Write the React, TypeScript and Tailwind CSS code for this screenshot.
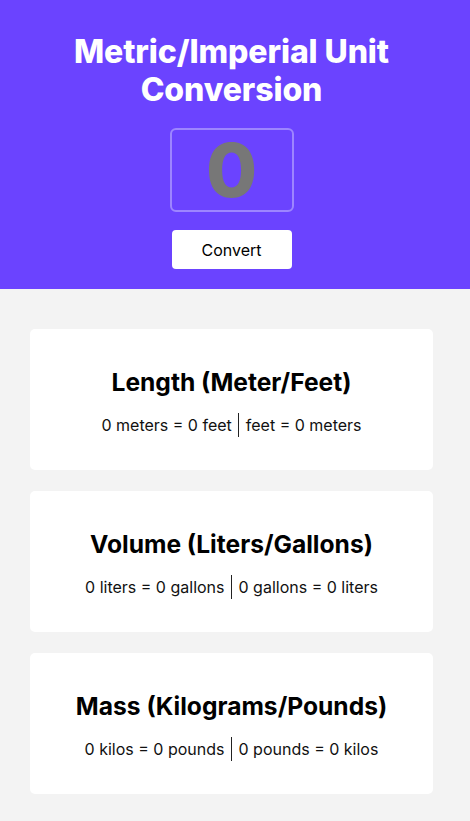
import React from "react";

const cards = [
  { title: "Length (Meter/Feet)", left: "0 meters = 0 feet", right: "feet = 0 meters" },
  { title: "Volume (Liters/Gallons)", left: "0 liters = 0 gallons", right: "0 gallons = 0 liters" },
  { title: "Mass (Kilograms/Pounds)", left: "0 kilos = 0 pounds", right: "0 pounds = 0 kilos" },
];

export default function App() {
  return (
    <div className="min-h-[821px] bg-[#f3f3f3] font-['Inter',sans-serif]">
      <header className="bg-[#6b43ff] h-[289px]">
        <div className="w-[463px] flex flex-col items-center pt-[33px]">
          <h1 className="text-white text-[32px] font-extrabold leading-[38px] text-center tracking-[-0.1px] w-[340px]">
            Metric/Imperial Unit Conversion
          </h1>
          <div className="mt-[19px] w-[124px] h-[84px] border-2 border-[#9d85ff] rounded-[6px] flex items-center justify-center">
            <span className="text-[#777777] text-[74px] font-extrabold leading-none">0</span>
          </div>
          <button className="mt-[18px] w-[120px] h-[39px] bg-white rounded-[4px] text-[16px] text-black">
            Convert
          </button>
        </div>
      </header>
      <main className="w-[463px] pt-[40px] px-[30px] flex flex-col gap-[21px] pb-[27px]">
        {cards.map((c) => (
          <div key={c.title} className="w-[403px] h-[141px] bg-white rounded-[5px] flex flex-col items-center pt-[38px]">
            <h2 className="text-[24.6px] font-bold leading-[31px] text-black">{c.title}</h2>
            <p className="mt-[15px] text-[16px] leading-[24px] text-[#111] flex items-center">
              <span className="pr-[6px] border-r border-[#222]">{c.left}</span>
              <span className="pl-[7px]">{c.right}</span>
            </p>
          </div>
        ))}
      </main>
    </div>
  );
}
